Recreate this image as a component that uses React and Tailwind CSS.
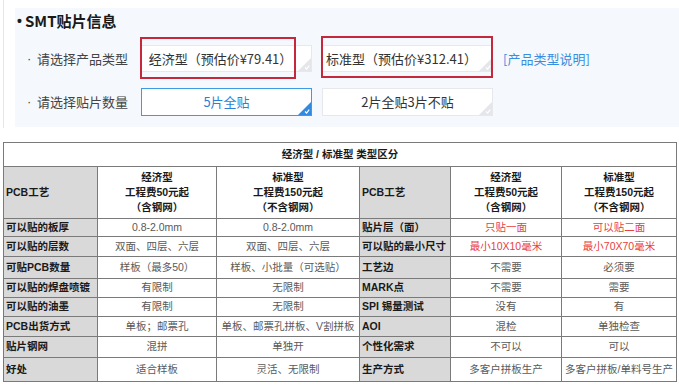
import React from 'react';

const rows = [
  { h: 'h-[18px]', a: '可以贴的板厚', b: '0.8-2.0mm', c: '0.8-2.0mm', d: '贴片层（面）', e: '只贴一面', f: '可以贴二面', red: true },
  { h: 'h-[20px]', a: '可以贴的层数', b: '双面、四层、六层', c: '双面、四层、六层', d: '可以贴的最小尺寸', e: '最小10X10毫米', f: '最小70X70毫米', red: true },
  { h: 'h-[22px]', a: '可贴PCB数量', b: '样板（最多50）', c: '样板、小批量（可选贴）', d: '工艺边', e: '不需要', f: '必须要' },
  { h: 'h-[19px]', a: '可以贴的焊盘喷镀', b: '有限制', c: '无限制', d: 'MARK点', e: '不需要', f: '需要' },
  { h: 'h-[19px]', a: '可以贴的油墨', b: '有限制', c: '无限制', d: 'SPI 锡量测试', e: '没有', f: '有' },
  { h: 'h-[20px]', a: 'PCB出货方式', b: '单板；邮票孔', c: '单板、邮票孔拼板、V割拼板', d: 'AOI', e: '混检', f: '单独检查' },
  { h: 'h-[21px]', a: '贴片钢网', b: '混拼', c: '单独开', d: '个性化需求', e: '不可以', f: '可以' },
  { h: 'h-[24px]', a: '好处', b: '适合样板', c: '灵活、无限制', d: '生产方式', e: '多客户拼板生产', f: '多客户拼板/单料号生产' },
];

function Corner({ active }) {
  return (
    <svg className="absolute right-0 bottom-0" width="13" height="13" viewBox="0 0 13 13">
      <path d="M13 0 L13 13 L0 13 Z" fill={active ? '#2f8ae0' : '#e4e6ea'} />
      <path d="M7 9.5 L8.6 11 L11.2 7.6" fill="none" stroke="#fff" strokeWidth="1.2" />
    </svg>
  );
}

function OptionBox({ text, active, className = '', children }) {
  return (
    <div
      className={`relative flex items-center justify-center bg-white border text-[13px] ${
        active ? 'border-[#3d9be6] text-[#2b7fd6]' : 'border-[#e6e8ec] text-[#333]'
      } ${className}`}
    >
      <span className="whitespace-nowrap">{text}</span>
      <Corner active={active} />
      {children}
    </div>
  );
}

function Label({ children }) {
  return (
    <div className="w-[114px] flex items-center text-[13px] text-[#444] whitespace-nowrap">
      <span className="w-[10px] font-['Liberation_Sans',sans-serif]">·</span>
      <span>{children}</span>
    </div>
  );
}

const lab = 'border border-[#7a7a7a] bg-[#d9d9d9] font-bold text-[#1a1a1a] text-left pl-[2px] whitespace-nowrap';
const val = 'border border-[#7a7a7a] text-center text-[#595959] whitespace-nowrap';
const head = 'border border-[#7a7a7a] text-center font-bold text-[#1a1a1a] leading-[15px]';

export default function App() {
  return (
    <div className="w-[679px] h-[385px] bg-white overflow-hidden font-['Noto_Sans_CJK_SC',sans-serif]">
      {/* SMT section */}
      <div className="h-[128px] ml-[3px] border-l border-[#e6e6e6] pl-[11px] pt-[8px]">
        <div className="h-[119px] bg-[#f5f8fc]">
          <div className="h-[26px] flex items-center text-[15px] font-bold text-[#1a1a1a]">
            <span className="w-[10px] pl-[2px] font-['Liberation_Sans',sans-serif] text-[14px]">•</span>
            <span>SMT贴片信息</span>
          </div>

          <div className="flex items-center pt-[11px] pl-[12px]">
            <Label>请选择产品类型</Label>
            <OptionBox text="经济型（预估价¥79.41）" className="w-[171px] h-[27px] pr-[12px]">
              <div className="absolute left-[-2px] top-[-9px] w-[156px] h-[42px] border-2 border-[#c5283b]" />
            </OptionBox>
            <OptionBox text="标准型（预估价¥312.41）" className="w-[171px] h-[27px] ml-[10px] pr-[12px]">
              <div className="absolute left-[-2px] top-[-10px] w-[172px] h-[42px] border-2 border-[#c5283b]" />
            </OptionBox>
            <span className="ml-[10px] text-[13px] text-[#3a8ee0] whitespace-nowrap">[产品类型说明]</span>
          </div>

          <div className="flex items-center mt-[16px] pl-[12px]">
            <Label>请选择贴片数量</Label>
            <OptionBox text="5片全贴" active className="w-[171px] h-[28px]" />
            <OptionBox text="2片全贴3片不贴" className="w-[171px] h-[28px] ml-[10px]" />
          </div>
        </div>
      </div>

      {/* Comparison table */}
      <table className="mt-[14px] ml-[3px] w-[673px] table-fixed border-collapse text-[10.5px] font-['Liberation_Sans','Noto_Sans_CJK_SC',sans-serif]">
        <colgroup>
          <col className="w-[94px]" />
          <col className="w-[119px]" />
          <col className="w-[143px]" />
          <col className="w-[91px]" />
          <col className="w-[111px]" />
          <col className="w-[115px]" />
        </colgroup>
        <tbody>
          <tr className="h-[24px]">
            <td colSpan={6} className="border border-[#7a7a7a] text-center font-bold text-[#1a1a1a]">
              经济型 / 标准型 类型区分
            </td>
          </tr>
          <tr className="h-[52px]">
            <td className={lab}>PCB工艺</td>
            <td className={head}>经济型<br />工程费50元起<br />（含钢网）</td>
            <td className={head}>标准型<br />工程费150元起<br />（不含钢网）</td>
            <td className={lab}>PCB工艺</td>
            <td className={head}>经济型<br />工程费50元起<br />（含钢网）</td>
            <td className={head}>标准型<br />工程费150元起<br />（不含钢网）</td>
          </tr>
          {rows.map((r, i) => (
            <tr key={i} className={r.h}>
              <td className={lab}>{r.a}</td>
              <td className={val}>{r.b}</td>
              <td className={val}>{r.c}</td>
              <td className={lab}>{r.d}</td>
              <td className={`${val} ${r.red ? 'text-[#e8403f]' : ''}`}>{r.e}</td>
              <td className={`${val} ${r.red ? 'text-[#e8403f]' : ''}`}>{r.f}</td>
            </tr>
          ))}
        </tbody>
      </table>
    </div>
  );
}
